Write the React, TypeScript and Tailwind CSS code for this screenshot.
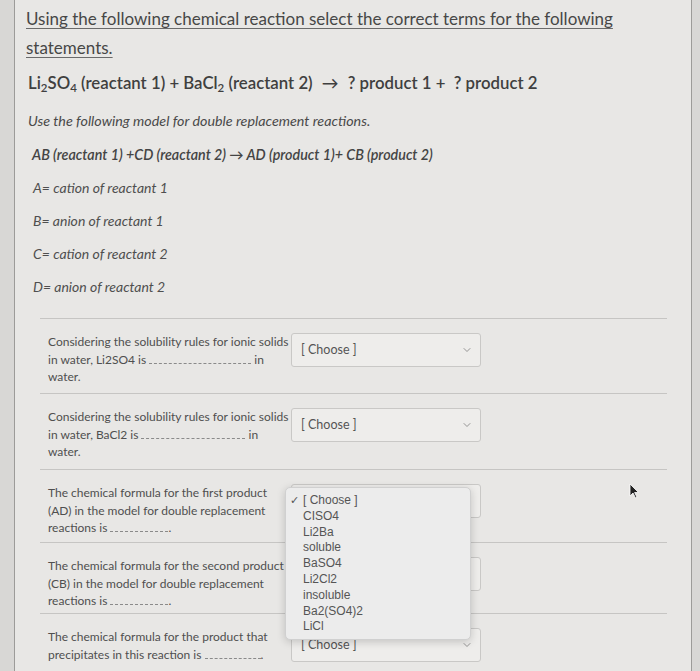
import { ChevronDown } from 'lucide-react';

const options = ['CISO4', 'Li2Ba', 'soluble', 'BaSO4', 'Li2Cl2', 'insoluble', 'Ba2(SO4)2', 'LiCl'];

function Blank({ w }: { w: string }) {
  return <span className={`inline-block border-b border-dashed border-[#8a8a8a] align-baseline ${w}`} />;
}

function Select({ hideText = false }: { hideText?: boolean }) {
  return (
    <div className="flex h-[34px] w-[190px] items-center justify-between rounded-[3px] border border-[#c9c8c6] bg-[#eeedeb] pl-[9px] pr-[7px]">
      <span className={`text-[12.5px] text-[#555] ${hideText ? 'invisible' : ''}`}>[ Choose ]</span>
      <ChevronDown size={12} strokeWidth={1.5} className="text-[#777]" />
    </div>
  );
}

function Row({ children, select, h }: { children: React.ReactNode; select: React.ReactNode; h: string }) {
  return (
    <div className={`flex items-start border-t border-[#c6c5c3] pt-[14px] pl-[8px] ${h}`}>
      <div className="w-[243px] text-[12px] leading-[17.5px] text-[#4f4f4f]">{children}</div>
      <div>{select}</div>
    </div>
  );
}

export default function App() {
  return (
    <div className="flex h-[671px] w-[700px] overflow-hidden bg-[#d8d7d5]" style={{ fontFamily: 'Lato, "Open Sans", sans-serif' }}>
      <div className="ml-[14px] w-[678px] border-x border-[#9c9b99] bg-[#e8e7e5] pl-[11px] pr-[22px] pt-[4px]">
        <p className="text-[17px] leading-[29px] text-[#474747] underline decoration-[#6a6a6a] underline-offset-[3px]">
          Using the following chemical reaction select the correct terms for the following statements.
        </p>

        <p className="mt-[9px] pl-[2px] text-[16.8px] leading-[24px] font-semibold text-[#3f3f3f]">
          Li<sub className="text-[11.5px]">2</sub>SO<sub className="text-[11.5px]">4</sub> (reactant 1) + BaCl<sub className="text-[11.5px]">2</sub> (reactant 2) <span className="mx-[5px]">→</span> ? product 1 + &nbsp;? product 2
        </p>

        <p className="mt-[16px] pl-[2px] text-[14.3px] italic leading-[20px] text-[#4a4a4a]">
          Use the following model for double replacement reactions.
        </p>

        <p className="mt-[14px] pl-[6px] text-[14.3px] font-semibold italic leading-[20px] text-[#444]">
          AB (reactant 1) +CD (reactant 2) → AD (product 1)+ CB (product 2)
        </p>

        <div className="pl-[7px] text-[14px] italic leading-[20px] text-[#4f4f4f]">
          <p className="mt-[13px]">A= cation of reactant 1</p>
          <p className="mt-[13px]">B= anion of reactant 1</p>
          <p className="mt-[13px]">C= cation of reactant 2</p>
          <p className="mt-[13px]">D= anion of reactant 2</p>
        </div>

        <div className="ml-[14px] mr-[2px] mt-[21px]">
          <Row h="h-[75px]" select={<Select />}>
            <div className="whitespace-nowrap">Considering the solubility rules for ionic solids</div>
            <div className="whitespace-nowrap">
              in water, Li2SO4 is <Blank w="w-[102px]" /> in
            </div>
            <div>water.</div>
          </Row>
          <Row h="h-[76px]" select={<Select />}>
            <div className="whitespace-nowrap">Considering the solubility rules for ionic solids</div>
            <div className="whitespace-nowrap">
              in water, BaCl2 is <Blank w="w-[104px]" /> in
            </div>
            <div>water.</div>
          </Row>
          <Row
            h="h-[73px]"
            select={
              <div className="relative">
                <Select hideText />
                <div
                  className="absolute left-[-6px] top-[3px] z-10 w-[186px] rounded-[5px] border border-[#d0d0d0] bg-[#ececec] pb-[4px] pt-[5px] text-[12px] leading-[15.8px] text-[#555] shadow-[0_2px_8px_rgba(0,0,0,0.18)]"
                  style={{ fontFamily: '"Liberation Sans", Arial, sans-serif' }}
                >
                  <div className="flex">
                    <span className="w-[17px] pl-[4px] text-[11px]">✓</span>
                    <span>[ Choose ]</span>
                  </div>
                  {options.map((o) => (
                    <div key={o} className="pl-[17px]">
                      {o}
                    </div>
                  ))}
                </div>
              </div>
            }
          >
            <div className="whitespace-nowrap">The chemical formula for the first product</div>
            <div className="whitespace-nowrap">(AD) in the model for double replacement</div>
            <div className="whitespace-nowrap">
              reactions is <Blank w="w-[58px]" />.
            </div>
          </Row>
          <Row h="h-[71px]" select={<Select hideText />}>
            <div className="whitespace-nowrap">The chemical formula for the second product</div>
            <div className="whitespace-nowrap">(CB) in the model for double replacement</div>
            <div className="whitespace-nowrap">
              reactions is <Blank w="w-[58px]" />.
            </div>
          </Row>
          <Row h="h-[72px]" select={<Select />}>
            <div className="whitespace-nowrap">The chemical formula for the product that</div>
            <div className="whitespace-nowrap">
              precipitates in this reaction is <Blank w="w-[56px]" />.
            </div>
          </Row>
        </div>
      </div>

      <svg className="absolute left-[629px] top-[483px]" width="10" height="16" viewBox="0 0 10 16">
        <path d="M1 1 L1 13 L4 10 L6.5 15 L8 14.3 L5.6 9.5 L9.5 9.5 Z" fill="#222" stroke="#fff" strokeWidth="0.8" />
      </svg>
    </div>
  );
}
